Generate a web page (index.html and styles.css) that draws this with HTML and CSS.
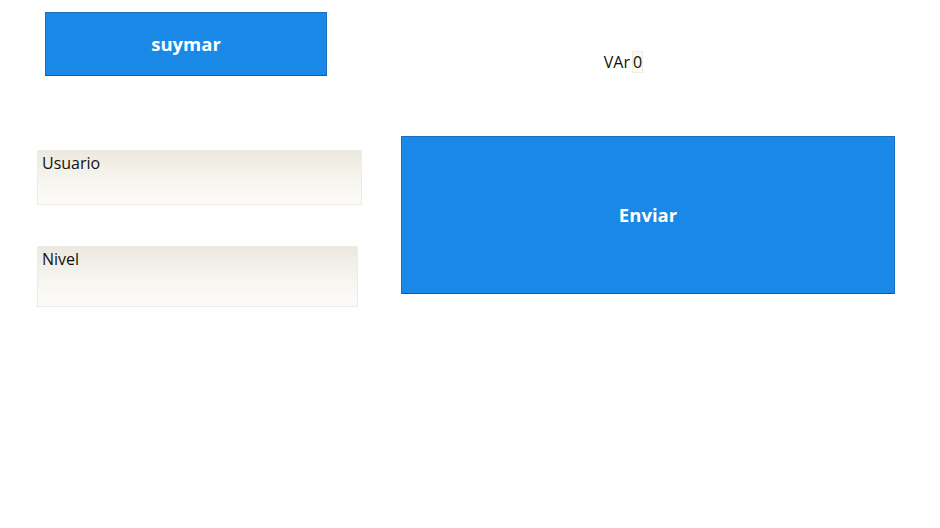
FILE: index.html
```html
<!DOCTYPE html>
<html>
<head>
<meta charset="utf-8">
<link rel="stylesheet" href="styles.css">
</head>
<body>
<div class="page">
  <div class="col-left">
    <button class="btn btn-sumar">suymar</button>
    <div class="field field-usuario">Usuario</div>
    <div class="field field-nivel">Nivel</div>
  </div>
  <div class="col-right">
    <div class="var-line"><span class="var-label">VAr</span> <span class="var-value">0</span></div>
    <button class="btn btn-enviar">Enviar</button>
  </div>
</div>
</body>
</html>
```

FILE: styles.css
```css
html, body {
  margin: 0;
  padding: 0;
  background: #ffffff;
  font-family: "Open Sans", "Noto Sans", sans-serif;
  color: #111;
}
.page {
  display: flex;
  width: 940px;
  height: 528px;
}
.col-left {
  display: flex;
  flex-direction: column;
  margin-left: 37px;
  width: 325px;
}
.col-right {
  display: flex;
  flex-direction: column;
  margin-left: 39px;
  width: 494px;
}
.btn {
  background: #1a88e6;
  border: 1px solid #1a6fc0;
  border-bottom-color: #145aa0;
  color: #fff;
  font-family: "Open Sans", "Noto Sans", sans-serif;
  font-weight: 700;
  font-size: 18.5px;
  padding: 0 0 2px 0;
  cursor: pointer;
}
.btn-sumar {
  margin: 12px 0 0 8px;
  width: 282px;
  height: 64px;
}
.field {
  box-sizing: border-box;
  background: linear-gradient(to bottom, #ece9df 0%, #f6f5f0 55%, #fcfbf9 100%);
  border: 1px solid #ecebe6;
  font-size: 16px;
  line-height: 22px;
  padding: 1px 4px;
}
.field-usuario {
  margin-top: 74px;
  width: 325px;
  height: 55px;
}
.field-nivel {
  margin-top: 41px;
  width: 321px;
  height: 61px;
}
.var-line {
  margin-top: 49px;
  height: 26px;
  display: flex;
  align-items: center;
  justify-content: center;
  gap: 2px;
  padding-right: 49px;
  font-size: 16px;
}
.var-value {
  background: #fbfaf0;
  border: 1px solid #eeeedd;
  padding: 0;
  line-height: 20px;
}
.btn-enviar {
  margin-top: 61px;
  width: 494px;
  height: 158px;
}
```
